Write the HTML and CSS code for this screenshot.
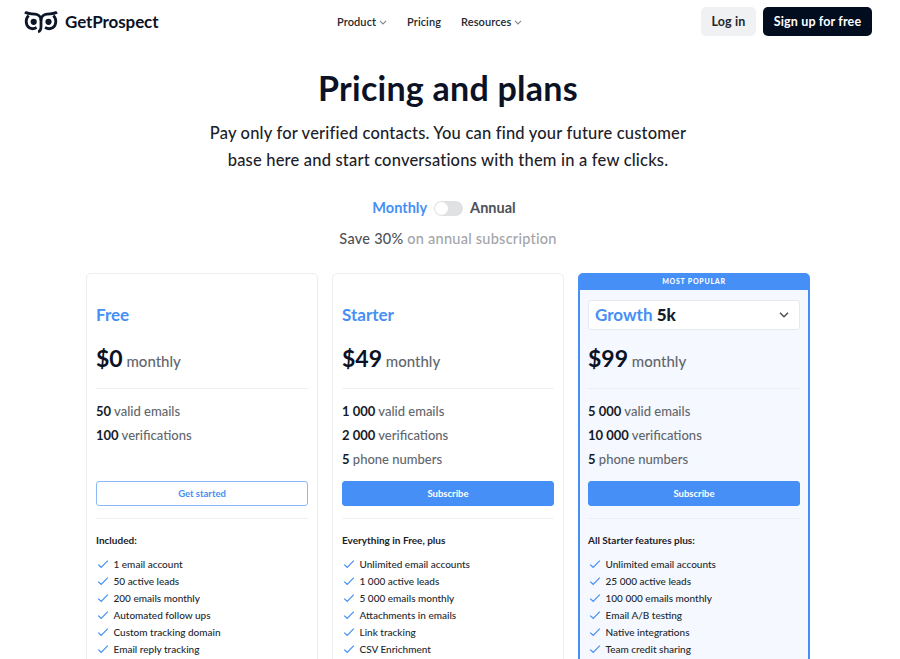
FILE: index.html
```
<!DOCTYPE html>
<html lang="en">

<head>
  <meta charset="UTF-8">
  <meta name="viewport" content="width=device-width, initial-scale=1.0">
  <title>Pricing and plans - GetProspect</title>
  <link rel="stylesheet" href="styles.css">
</head>

<body>
  <!-- shared icons -->
  <svg class="sprite" width="0" height="0">
    <symbol id="check" viewBox="0 0 12 10">
      <path d="M1.2 5.6 L4.2 8.3 L10.8 1.6" fill="none" stroke="currentColor" stroke-width="1.2"/>
    </symbol>
    <symbol id="arrow" viewBox="0 0 10 6">
      <path d="M1.2 1 L5 4.8 L8.8 1" fill="none" stroke="currentColor" stroke-width="1.3"/>
    </symbol>
  </svg>

  <div class="page">
    <header class="header">
      <a href="#" class="logo">
        <svg class="logo-icon" width="34" height="22" viewBox="0 0 34 22">
          <g fill="none" stroke="#0b1628" stroke-width="2.8">
            <path d="M1 1.2 C4 3.5 9 2.2 13 3.5 C16 4.6 17 6.8 17 9.5 V15.5 C17 18.5 16.4 20.3 14 20.6"/>
            <path d="M33 1.2 C30 3.5 25 2.2 21 3.5 C18 4.6 17 6.8 17 9.5"/>
            <path d="M4.6 4.4 C1 8 1.6 14.4 5.4 16.8 C7.8 18.2 10.4 17.8 12.6 16.6"/>
            <path d="M29.4 4.4 C33 8 32.4 14.4 28.6 16.8 C26.2 18.2 23.4 17.9 21 16.4"/>
          </g>
          <circle cx="9.7" cy="10.8" r="3.1" fill="#0b1628"/>
          <circle cx="24.5" cy="10.8" r="3.1" fill="#0b1628"/>
        </svg>
        <span class="logo-text">GetProspect</span>
      </a>
      <nav class="nav">
        <a href="#">Product <svg width="8" height="5"><use href="#arrow"/></svg></a>
        <a href="#">Pricing</a>
        <a href="#">Resources <svg width="8" height="5"><use href="#arrow"/></svg></a>
      </nav>
      <div class="auth">
        <a href="#" class="login">Log in</a>
        <a href="#" class="signup">Sign up for free</a>
      </div>
    </header>

    <section class="intro">
      <h1>Pricing and plans</h1>
      <p class="lead">Pay only for verified contacts. You can find your future customer<br>base here and start conversations with them in a few clicks.</p>
      <div class="period">
        <span class="active">Monthly</span>
        <span class="switch"></span>
        <span class="annual">Annual</span>
      </div>
      <p class="save"><b>Save 30%</b> on annual subscription</p>
    </section>

    <section class="plans">
      <div class="card">
        <h2>Free</h2>
        <div class="price"><b>$0</b> monthly</div>
        <ul class="limits">
          <li><b>50</b> valid emails</li>
          <li><b>100</b> verifications</li>
        </ul>
        <a href="#" class="btn btn-outline">Get started</a>
        <div class="features">
          <h3>Included:</h3>
          <ul>
            <li><svg><use href="#check"/></svg>1 email account</li>
            <li><svg><use href="#check"/></svg>50 active leads</li>
            <li><svg><use href="#check"/></svg>200 emails monthly</li>
            <li><svg><use href="#check"/></svg>Automated follow ups</li>
            <li><svg><use href="#check"/></svg>Custom tracking domain</li>
            <li><svg><use href="#check"/></svg>Email reply tracking</li>
          </ul>
        </div>
      </div>

      <div class="card">
        <h2>Starter</h2>
        <div class="price"><b>$49</b> monthly</div>
        <ul class="limits">
          <li><b>1 000</b> valid emails</li>
          <li><b>2 000</b> verifications</li>
          <li><b>5</b> phone numbers</li>
        </ul>
        <a href="#" class="btn">Subscribe</a>
        <div class="features">
          <h3>Everything in Free, plus</h3>
          <ul>
            <li><svg><use href="#check"/></svg>Unlimited email accounts</li>
            <li><svg><use href="#check"/></svg>1 000 active leads</li>
            <li><svg><use href="#check"/></svg>5 000 emails monthly</li>
            <li><svg><use href="#check"/></svg>Attachments in emails</li>
            <li><svg><use href="#check"/></svg>Link tracking</li>
            <li><svg><use href="#check"/></svg>CSV Enrichment</li>
          </ul>
        </div>
      </div>

      <div class="card popular">
        <div class="ribbon">MOST POPULAR</div>
        <h2 class="select"><span>Growth <b>5k</b></span>
          <svg width="10" height="6" viewBox="0 0 10 6"><path d="M1 .8 L5 4.8 L9 .8" fill="none" stroke="#4b5158" stroke-width="1.5"/></svg>
        </h2>
        <div class="price"><b>$99</b> monthly</div>
        <ul class="limits">
          <li><b>5 000</b> valid emails</li>
          <li><b>10 000</b> verifications</li>
          <li><b>5</b> phone numbers</li>
        </ul>
        <a href="#" class="btn">Subscribe</a>
        <div class="features">
          <h3>All Starter features plus:</h3>
          <ul>
            <li><svg><use href="#check"/></svg>Unlimited email accounts</li>
            <li><svg><use href="#check"/></svg>25 000 active leads</li>
            <li><svg><use href="#check"/></svg>100 000 emails monthly</li>
            <li><svg><use href="#check"/></svg>Email A/B testing</li>
            <li><svg><use href="#check"/></svg>Native integrations</li>
            <li><svg><use href="#check"/></svg>Team credit sharing</li>
          </ul>
        </div>
      </div>
    </section>
  </div>
</body>

</html>
```
FILE: styles.css
```
* {
  margin: 0;
  padding: 0;
  box-sizing: border-box;
}

body {
  font-family: Lato, "Open Sans", sans-serif;
  color: #0b1225;
  background-color: #fff;
}

a {
  color: inherit;
  text-decoration: none;
}

ul {
  list-style: none;
}

.sprite {
  display: block;
}

.page {
  width: 896px;
  height: 659px;
  overflow: hidden;
}

/* header */
.header {
  display: grid;
  grid-template-columns: 313px 1fr auto;
  align-items: center;
  height: 43px;
  padding: 0 24px;
}

.logo {
  display: flex;
  align-items: center;
  gap: 7px;
}

.logo-text {
  font-size: 17px;
  font-weight: 700;
  line-height: 22px;
  letter-spacing: -0.1px;
}

.nav {
  display: flex;
  gap: 20px;
  padding-bottom: 1px;
  font-size: 11px;
  font-weight: 600;
  letter-spacing: 0.1px;
  color: #23282f;
}

.nav svg {
  color: #80858b;
  vertical-align: 1px;
}

.auth {
  display: flex;
  gap: 7px;
  font-size: 12.5px;
  font-weight: 700;
  line-height: 29px;
  letter-spacing: 0.15px;
  text-align: center;
}

.login {
  width: 55px;
  border-radius: 5px;
  background-color: #eff1f3;
  color: #23282f;
}

.signup {
  width: 109px;
  border-radius: 5px;
  background-color: #020d20;
  color: #fff;
}

/* intro */
.intro {
  height: 230px;
  padding-top: 23px;
  text-align: center;
}

h1 {
  font-size: 34px;
  font-weight: 700;
  line-height: 44px;
  letter-spacing: 0.25px;
}

.lead {
  margin-top: 10px;
  font-size: 16.5px;
  font-weight: 500;
  line-height: 27px;
  letter-spacing: 0.19px;
  color: #1c2129;
}

.period {
  display: flex;
  justify-content: center;
  align-items: center;
  gap: 7px;
  margin-top: 24px;
  padding-right: 8px;
  font-size: 14.5px;
  font-weight: 700;
  line-height: 20px;
  color: #4d5157;
}

.period .active {
  color: #458ff6;
}

.switch {
  width: 29px;
  height: 15px;
  padding: 1px;
  border-radius: 8px;
  background-color: #dfe1e3;
}

.switch::before {
  content: "";
  display: block;
  width: 13px;
  height: 13px;
  border-radius: 50%;
  background-color: #fff;
}

.save {
  margin-top: 11px;
  font-size: 14.5px;
  font-weight: 500;
  line-height: 20px;
  letter-spacing: 0.25px;
  color: #a3a5a9;
}

.save b {
  font-weight: 500;
  color: #4d5157;
}

/* plans */
.plans {
  display: grid;
  grid-template-columns: repeat(3, 232px);
  justify-content: center;
  gap: 14px;
}

.card {
  height: 420px;
  padding: 25px 9px 0;
  border: 1px solid #ebedef;
  border-radius: 5px;
}

.card h2 {
  height: 31px;
  font-size: 17px;
  font-weight: 700;
  line-height: 31px;
  color: #458ff6;
}

.price {
  height: 59px;
  padding-top: 12px;
  border-bottom: 1px solid #f0f1f3;
  font-size: 15px;
  font-weight: 500;
  line-height: 32px;
  color: #62676d;
}

.price b {
  font-size: 23px;
  font-weight: 700;
  color: #0b1225;
}

.limits {
  height: 92px;
  padding-top: 10px;
  font-size: 13px;
  font-weight: 500;
  line-height: 24px;
  color: #62676d;
}

.limits b {
  color: #151b28;
}

.btn {
  display: block;
  height: 25px;
  border: 1px solid #458ff6;
  border-radius: 3px;
  background-color: #458ff6;
  font-size: 9.5px;
  font-weight: 700;
  line-height: 23px;
  text-align: center;
  color: #fff;
}

.btn-outline {
  border-color: #8db9f9;
  background-color: #fff;
  color: #458ff6;
}

.features {
  margin-top: 12px;
  padding-top: 13px;
  border-top: 1px solid #f0f1f3;
}

.features h3 {
  font-size: 10px;
  font-weight: 700;
  line-height: 16px;
  color: #1c2129;
}

.features ul {
  margin-top: 7px;
}

.features li {
  display: flex;
  align-items: center;
  height: 17px;
  font-size: 10px;
  font-weight: 500;
  color: #23282f;
}

.features svg {
  width: 12px;
  height: 10px;
  margin: 0 4.5px 0 1px;
  color: #458ff6;
}

/* growth plan */
.popular {
  padding: 0 8px;
  border: 2px solid #458ff6;
  background-color: #f5f8fe;
}

.ribbon {
  height: 15px;
  margin: 0 -8px 10px;
  background-color: #458ff6;
  font-size: 7px;
  font-weight: 900;
  line-height: 13px;
  letter-spacing: 0.75px;
  text-align: center;
  color: #fff;
}

.card .select {
  display: flex;
  justify-content: space-between;
  align-items: center;
  height: 30px;
  padding: 0 10px 0 6px;
  border: 1px solid #e6eaf0;
  border-radius: 3px;
  background-color: #fff;
  line-height: 28px;
}

.select b {
  color: #151b28;
}

.popular .price,
.popular .features {
  border-color: #ebeff5;
}
```
